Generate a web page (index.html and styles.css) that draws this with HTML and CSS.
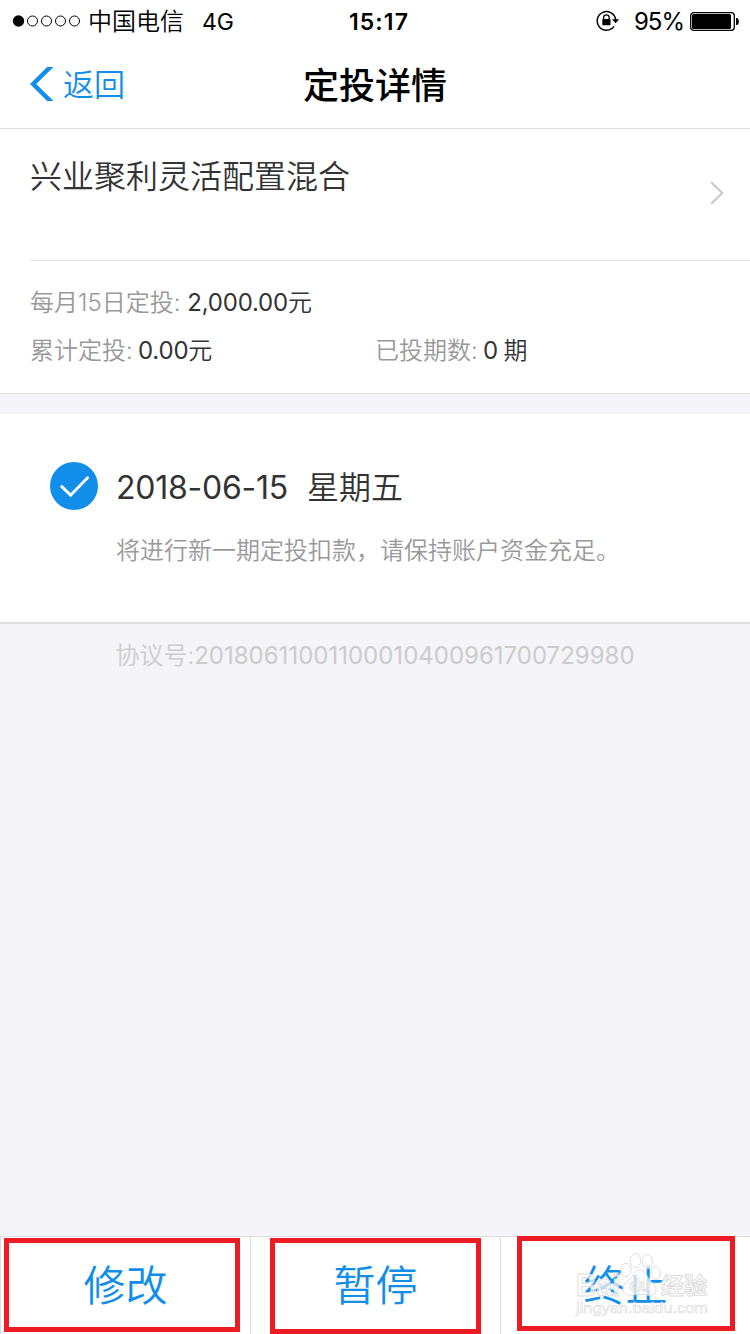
FILE: index.html
```html
<!DOCTYPE html>
<html lang="zh-CN">
<head>
<meta charset="utf-8">
<title>定投详情</title>
<link rel="stylesheet" href="styles.css">
</head>
<body>
<div class="screen">
  <header class="status">
    <div class="status-left">
      <svg class="signal" width="70" height="14" viewBox="0 0 70 14">
        <circle cx="6.5" cy="7" r="5.7" fill="#000"/>
        <g fill="none" stroke="#000" stroke-width="1">
          <circle cx="20.5" cy="7" r="5"/><circle cx="34.5" cy="7" r="5"/><circle cx="48.5" cy="7" r="5"/><circle cx="62.5" cy="7" r="5"/>
        </g>
      </svg>
      <span class="carrier">中国电信</span>
      <span class="network">4G</span>
    </div>
    <div class="clock">15:17</div>
    <div class="status-right">
      <svg class="lock" width="24" height="22" viewBox="0 0 24 22">
        <path d="M18 16.4A9.3 9.3 0 1 1 19.7 9.6" fill="none" stroke="#000" stroke-width="1.5"/>
        <path d="M16 9.2h7.2l-3.6 4z" fill="#000"/>
        <path d="M7.6 9.5V7.7a2.8 2.8 0 0 1 5.6 0v1.8" fill="none" stroke="#000" stroke-width="1.3"/>
        <rect x="6.3" y="9" width="8.2" height="6.2" rx=".6" fill="#000"/>
      </svg>
      <span class="percent">95%</span>
      <svg class="battery" width="49" height="19" viewBox="0 0 49 19">
        <rect x=".7" y=".7" width="43.6" height="17.6" rx="3" fill="none" stroke="#000" stroke-width="1.3"/>
        <rect x="2" y="2" width="39" height="15" rx="1.5" fill="#000"/>
        <path d="M46 6h.6a2.2 3.5 0 0 1 0 7H46z" fill="#000"/>
      </svg>
    </div>
  </header>
  <nav class="nav">
    <a class="back">
      <svg width="24" height="34" viewBox="0 0 24 34"><path d="M23.5 0h-6.4L0 17l17.1 17h6.4L6.2 17z" fill="#108ee9"/></svg>
      <span class="back-text">返回</span>
    </a>
    <h1 class="title">定投详情</h1>
  </nav>
  <section class="plan">
    <div class="fund">
      <div class="fund-name">兴业聚利灵活配置混合</div>
      <svg class="arrow" width="14" height="24" viewBox="0 0 14 24"><path d="M1.2 1.2 12.3 12 1.2 22.8" fill="none" stroke="#c7c7cc" stroke-width="2"/></svg>
    </div>
    <div class="facts">
      <div class="fact wide"><span class="label">每月15日定投: </span><span class="amount">2,000.00</span>元</div>
      <div class="fact"><span class="label">累计定投: </span><span class="amount">0.00</span>元</div>
      <div class="fact"><span class="label">已投期数: </span><span class="amount">0 </span>期</div>
    </div>
  </section>
  <section class="next">
    <svg class="check" width="48" height="48" viewBox="0 0 48 48">
      <circle cx="24" cy="24" r="24" fill="#108ee9"/>
      <path d="M11.8 24.6 20.6 33.2 37.6 15.8" fill="none" stroke="#fff" stroke-width="3" stroke-linecap="round"/>
    </svg>
    <div class="next-body">
      <div class="date"><span class="day">2018-06-15</span><span>星期五</span></div>
      <div class="note">将进行新一期定投扣款，请保持账户资金充足。</div>
    </div>
  </section>
  <div class="agreement">协议号:<span class="number">20180611001100010400961700729980</span></div>
  <footer class="actions">
    <div class="action">修改<i class="mark mark-edit"></i></div>
    <div class="action">暂停<i class="mark mark-pause"></i></div>
    <div class="action">终止<i class="mark mark-stop"></i>
      <svg class="watermark" width="140" height="70" viewBox="0 0 140 70">
        <text class="wm-bai" x="1" y="44" textLength="44" lengthAdjust="spacingAndGlyphs">Bai</text>
        <g class="wm-paw">
          <ellipse cx="51" cy="18" rx="5" ry="6.7"/><ellipse cx="60.500" cy="8.500" rx="5.2" ry="7"/><ellipse cx="72.500" cy="9.500" rx="5.2" ry="7"/><ellipse cx="80.500" cy="21" rx="4.8" ry="6.500"/>
          <path d="M65 18c-5 0-6 5-10 9s-8 6-7 11 7 6 10 5 11-1 14 0 9 0 9-5-4-7-7-11-4-9-9-9z"/>
        </g>
        <text class="wm-du" x="65" y="39" text-anchor="middle">du</text>
        <text class="wm-cn" x="86" y="42">经验</text>
        <text class="wm-url" x="1" y="61" textLength="132" lengthAdjust="spacingAndGlyphs">jingyan.baidu.com</text>
      </svg>
    </div>
  </footer>
</div>
</body>
</html>
```

FILE: styles.css
```css
* { box-sizing: border-box; }
body {
  margin: 0;
  color: #333;
  font-family: Inter, "Noto Sans CJK SC", sans-serif;
  font-weight: 350;
}
svg { display: block; flex: none; }
.screen {
  width: 750px;
  height: 1334px;
  display: flex;
  flex-direction: column;
  overflow: hidden;
  background: #f4f4f9;
}
.status {
  height: 40px;
  flex: none;
  display: grid;
  grid-template-columns: 1fr auto 1fr;
  align-items: center;
  padding: 0 11px 0 12px;
  background: #fff;
  color: #000;
  font-size: 24px;
  line-height: 40px;
}
.status-left, .status-right { display: flex; align-items: center; }
.status-right { justify-content: flex-end; }
.carrier { margin-left: 6px; padding-top: 2px; }
.network { margin-left: 18px; padding-top: 1px; font-size: 23px; font-weight: 400; }
.clock { font-size: 23px; font-weight: 600; letter-spacing: 1.1px; margin-left: 7px; padding-top: 1px; }
.percent { margin: 0 6px 0 13px; padding-top: 1px; font-size: 24px; letter-spacing: -1px; font-weight: 400; }
.lock { margin-right: 1px; }
.nav {
  height: 89px;
  flex: none;
  display: grid;
  grid-template-columns: 1fr auto 1fr;
  align-items: center;
  padding: 0 30px;
  background: #fff;
  border-bottom: 1px solid #ddd;
}
.back {
  display: flex;
  align-items: center;
  gap: 9px;
  color: #108ee9;
  font-size: 31px;
}
.back-text { padding-bottom: 4px; }
.title { margin: 0; padding-bottom: 3px; color: #000; font-size: 36px; font-weight: 500; }
.plan { flex: none; background: #fff; border-bottom: 1px solid #e5e5e5; }
.fund {
  height: 132px;
  margin-left: 30px;
  padding: 24px 26px 0 0;
  display: flex;
  justify-content: space-between;
  border-bottom: 1px solid #e5e5e5;
}
.fund-name { font-size: 32px; line-height: 48px; }
.arrow { margin-top: 28px; }
.facts {
  height: 132px;
  padding: 18px 30px 0;
  display: grid;
  grid-template-columns: 1fr 1fr;
  grid-auto-rows: 48px;
  font-size: 24px;
  line-height: 48px;
}
.fact { white-space: pre; }
.fact:not(.wide) .label { word-spacing: -1.5px; }
.wide { grid-column: 1 / -1; }
.label { color: #999; }
.amount { font-weight: 400; letter-spacing: -0.2px; word-spacing: -1px; }
.next {
  height: 210px;
  flex: none;
  margin-top: 20px;
  padding: 48px 50px 0;
  display: flex;
  gap: 18px;
  background: #fff;
  border-bottom: 2px solid #ddd;
}
.date { display: flex; gap: 20px; font-size: 32px; line-height: 52px; }
.day { width: 171px; white-space: nowrap; font-weight: 400; letter-spacing: -0.25px; }
.note { margin-top: 13px; color: #999; font-size: 24px; line-height: 48px; white-space: nowrap; }
.agreement {
  flex: 1;
  padding-top: 8px;
  text-align: center;
  color: #ccc;
  font-size: 24px;
  line-height: 48px;
  white-space: nowrap;
}
.number { font-weight: 400; }
.actions {
  height: 98px;
  flex: none;
  display: grid;
  grid-template-columns: repeat(3, 1fr);
  background: #fff;
  border-top: 1px solid #ddd;
}
.action {
  position: relative;
  border-left: 1px solid #ddd;
  color: #108ee9;
  font-size: 42px;
  line-height: 98px;
  text-align: center;
}
.mark { position: absolute; border: 5px solid #ed1c24; }
.mark-edit { left: 3px; top: 1px; width: 236px; height: 94px; }
.mark-pause { left: 19px; top: 1px; width: 211px; height: 96px; }
.mark-stop { left: 16px; top: -1px; width: 218px; height: 95px; }
.watermark {
  position: absolute;
  left: 74px;
  top: 15px;
  fill: rgba(255, 255, 255, 0.7);
  stroke: #ddd;
  stroke-width: 1px;
  font-family: "Liberation Sans", "Noto Sans CJK SC", sans-serif;
  font-weight: 700;
}
.wm-bai { font-size: 31px; }
.wm-du { font-size: 17px; }
.wm-cn { font-size: 23px; }
.wm-url { font-size: 15px; stroke-width: 0.6px; font-weight: 400; }
```
